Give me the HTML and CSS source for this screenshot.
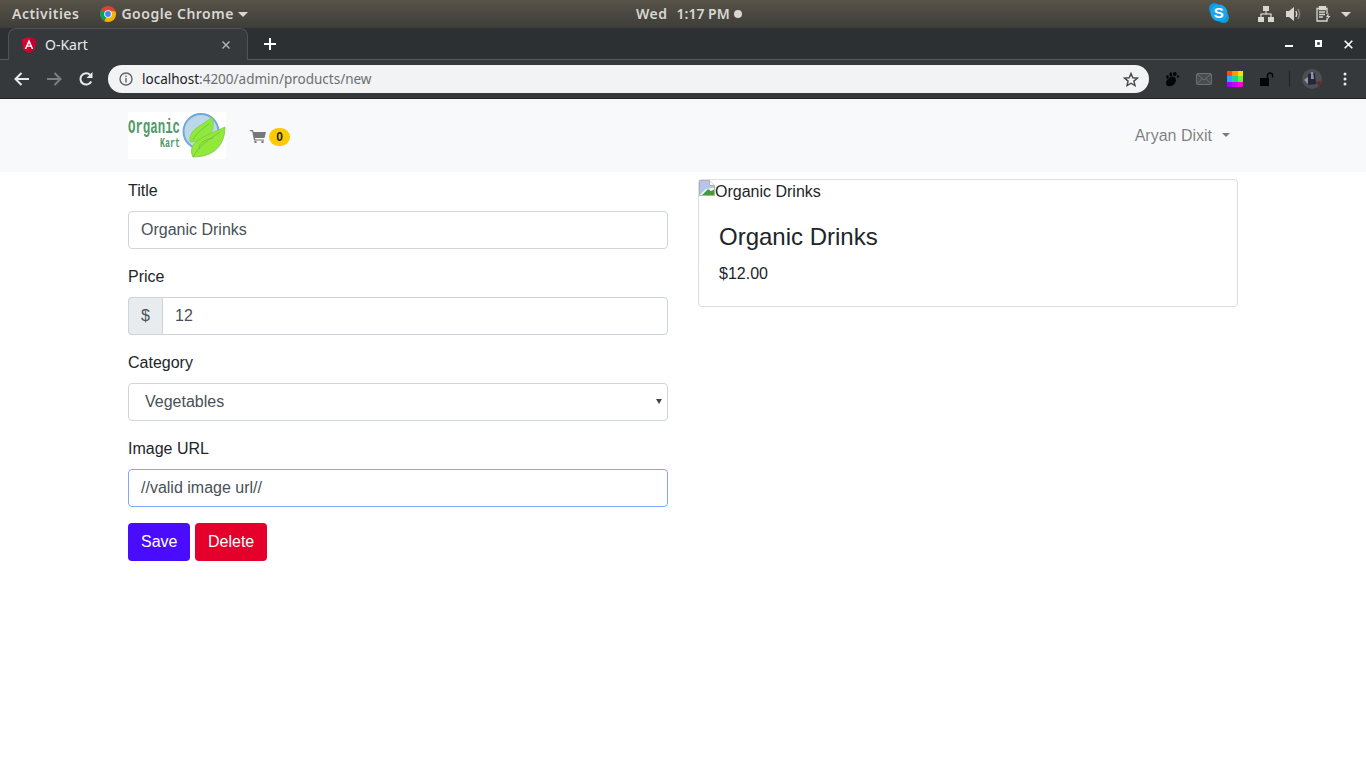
FILE: index.html
```html
<!DOCTYPE html>
<html lang="en">
<head>
  <meta charset="UTF-8">
  <title>O-Kart</title>
  <link rel="stylesheet" href="styles.css">
</head>
<body>

  <!-- Desktop top bar -->
  <div class="topbar">
    <div class="topbar-left">
      <span class="activities">Activities</span>
      <svg class="chrome-logo" width="16" height="16" viewBox="0 0 16 16">
        <circle cx="8" cy="8" r="8" fill="#db4437"/>
        <path d="M8 8 L1.07 4 A8 8 0 0 0 5 15.4 Z" fill="#0f9d58"/>
        <path d="M8 8 L4.4 15.1 A8 8 0 0 0 8 16 A8 8 0 0 0 15.6 5.5 L8 4.5 Z" fill="#f4b400"/>
        <circle cx="8" cy="8" r="3.8" fill="#fff"/>
        <circle cx="8" cy="8" r="2.9" fill="#4285f4"/>
      </svg>
      <span class="app-name">Google Chrome</span>
      <span class="caret-light app-caret"></span>
    </div>
    <div class="clock">
      <span class="clock-day">Wed</span>
      <span>1:17 PM</span>
      <span class="clock-dot"></span>
    </div>
    <div class="tray">
      <svg class="tray-skype" width="22" height="22" viewBox="0 0 22 22">
        <circle cx="6.5" cy="6.5" r="5.5" fill="#1296dc"/>
        <circle cx="15.5" cy="15.5" r="5.5" fill="#1296dc"/>
        <circle cx="11" cy="11" r="8.5" fill="#1ca6ea"/>
        <text x="11" y="16" text-anchor="middle" class="skype-s">S</text>
      </svg>
      <svg class="tray-net" width="16" height="16" viewBox="0 0 16 16" fill="#d8d6d0">
        <rect x="5" y="0" width="6" height="5"/>
        <rect x="7.4" y="5" width="1.2" height="3"/>
        <rect x="2.5" y="7.4" width="11" height="1.2"/>
        <rect x="2.4" y="8" width="1.2" height="3"/>
        <rect x="12.4" y="8" width="1.2" height="3"/>
        <rect x="0" y="11" width="6" height="5"/>
        <rect x="10" y="11" width="6" height="5"/>
      </svg>
      <svg class="tray-vol" width="16" height="16" viewBox="0 0 16 16">
        <path d="M0 5 H3 L8 1 V15 L3 11 H0 Z" fill="#d8d6d0"/>
        <path d="M10 5 Q11.5 8 10 11" stroke="#d8d6d0" stroke-width="1.5" fill="none"/>
        <path d="M12 3 Q15 8 12 13" stroke="#85837d" stroke-width="1.5" fill="none"/>
      </svg>
      <svg class="tray-clip" width="16" height="16" viewBox="0 0 16 16" fill="none" stroke="#d8d6d0" stroke-width="1.3">
        <path d="M3 2.5 H11 V8 M11 12 V15 H1 V2.5 H3" transform="translate(1 0)"/>
        <rect x="4.5" y="0.5" width="6" height="3" fill="#d8d6d0"/>
        <path d="M4 6 H10 M4 8.5 H10 M4 11 H8"/>
        <path d="M13.5 7 L11 11 H13 L11.5 14.5 L15.5 10 H13.5 Z" fill="#d8d6d0" stroke="none"/>
      </svg>
      <span class="caret-light"></span>
    </div>
  </div>

  <!-- Chrome tabs -->
  <div class="tabstrip">
    <div class="tab">
      <svg class="tab-icon" width="14" height="16" viewBox="0 0 14 16">
        <path d="M7 0 L14 2.5 L12.9 12.6 L7 16 L1.1 12.6 L0 2.5 Z" fill="#dd0031"/>
        <path d="M7 0 L14 2.5 L12.9 12.6 L7 16 Z" fill="#c3002f"/>
        <path d="M7 2.2 L2.7 12 H4.3 L5.2 9.8 H8.8 L9.7 12 H11.3 Z M6 8.5 L7 6 L8 8.5 Z" fill="#fff" fill-rule="evenodd"/>
      </svg>
      <span class="tab-title">O-Kart</span>
      <svg class="tab-close" width="10" height="10" viewBox="0 0 10 10">
        <path d="M1.5 1.5 L8.5 8.5 M8.5 1.5 L1.5 8.5" stroke="#b5b8ba" stroke-width="1.4"/>
      </svg>
    </div>
    <svg class="new-tab" width="12" height="12" viewBox="0 0 12 12">
      <path d="M6 0 V12 M0 6 H12" stroke="#fff" stroke-width="2"/>
    </svg>
    <div class="window-controls">
      <svg width="8" height="8" viewBox="0 0 8 8"><rect x="0" y="5" width="8" height="2" fill="#fff"/></svg>
      <svg width="7" height="8" viewBox="0 0 7 8"><path d="M0 0 H7 V7 H0 Z M2.2 2.2 V4.8 H4.8 V2.2 Z" fill="#fff" fill-rule="evenodd"/></svg>
      <svg width="9" height="9" viewBox="0 0 9 9"><path d="M0.7 0.7 L8.3 8.3 M8.3 0.7 L0.7 8.3" stroke="#fff" stroke-width="1.6"/></svg>
    </div>
  </div>

  <!-- Chrome toolbar -->
  <div class="toolbar">
    <svg class="nav-btn" width="16" height="14" viewBox="0 0 16 14" fill="none" stroke="#e8eaed" stroke-width="2">
      <path d="M15 7 H2 M7.5 1 L1.5 7 L7.5 13"/>
    </svg>
    <svg class="nav-btn" width="16" height="14" viewBox="0 0 16 14" fill="none" stroke="#7c7f82" stroke-width="2">
      <path d="M1 7 H14 M8.5 1 L14.5 7 L8.5 13"/>
    </svg>
    <svg class="nav-btn nav-reload" width="16" height="16" viewBox="0 0 16 16" fill="none" stroke="#e8eaed" stroke-width="2">
      <path d="M13.2 10.5 A5.7 5.7 0 1 1 12.2 3.9"/>
      <path d="M14.5 1 V7 H8.5 Z" fill="#e8eaed" stroke="none"/>
    </svg>
    <div class="omnibox">
      <svg class="info-icon" width="14" height="14" viewBox="0 0 14 14" fill="none" stroke="#5f6368" stroke-width="1.4">
        <circle cx="7" cy="7" r="6"/>
        <path d="M7 6 V10.5 M7 3.5 V5"/>
      </svg>
      <span class="url"><span class="url-host">localhost</span>:4200/admin/products/new</span>
      <svg class="star-icon" width="16" height="15" viewBox="0 0 16 15" fill="none" stroke="#45484b" stroke-width="1.4">
        <path d="M8 1.5 L9.8 5.8 L14.5 6.1 L10.9 9.1 L12 13.6 L8 11.2 L4 13.6 L5.1 9.1 L1.5 6.1 L6.2 5.8 Z"/>
      </svg>
    </div>
    <div class="extensions">
      <svg class="ext ext-foot" width="14" height="15" viewBox="0 0 14 15" fill="#050505">
        <path d="M5.5 5 C10 3 12 7 10.500 10 C9 14.500 3 15.500 1.500 13 C0.500 11 1 7.500 5.500 5 Z"/>
        <ellipse cx="2.500" cy="5" rx="1.200" ry="2"/>
        <ellipse cx="5.800" cy="2.500" rx="1.400" ry="2.200"/>
        <ellipse cx="9.800" cy="2" rx="1.900" ry="1.900"/>
        <ellipse cx="13" cy="4.500" rx="1" ry="1.500"/>
      </svg>
      <svg class="ext ext-mail" width="16" height="12" viewBox="0 0 16 12" fill="#494c4e" stroke="#6f7273" stroke-width="1">
        <rect x="0.5" y="0.5" width="15" height="11" rx="1"/>
        <path d="M1 1 L8 7 L15 1 M1 11 L6 5.500 M15 11 L10 5.500" fill="none"/>
      </svg>
      <div class="ext palette">
        <i style="background:#ff4a0a"></i><i style="background:#ff9800"></i><i style="background:#ffe000"></i>
        <i style="background:#2aa8ff"></i><i style="background:#18d890"></i><i style="background:#70f030"></i>
        <i style="background:#a000ff"></i><i style="background:#d000f0"></i><i style="background:#ff00d0"></i>
      </div>
      <svg class="ext ext-lock" width="15" height="14" viewBox="0 0 15 14">
        <rect x="0" y="6" width="9" height="8" fill="#050505"/>
        <path d="M7.500 6 V3.500 A2.500 2.500 0 0 1 12.500 3.500 V5.500" fill="none" stroke="#050505" stroke-width="1.500"/>
      </svg>
      <span class="ext-divider"></span>
      <svg class="ext ext-avatar" width="20" height="20" viewBox="0 0 20 20">
        <circle cx="10" cy="10" r="10" fill="#4d4f52"/>
        <path d="M6 5 L13 4 L14 15 L6 16 Z" fill="#24263a"/>
        <path d="M9 3 L11 3 L12 10 L9 10 Z" fill="#8d93a4"/>
        <path d="M14 13 L19 12 L17 17 Z" fill="#7c1e22"/>
        <path d="M2 11 L6 8 L6 15 Z" fill="#93979b"/>
      </svg>
      <svg class="ext" width="4" height="14" viewBox="0 0 4 14" fill="#e8eaed">
        <circle cx="2" cy="2" r="1.500"/><circle cx="2" cy="7" r="1.500"/><circle cx="2" cy="12" r="1.500"/>
      </svg>
    </div>
  </div>

  <!-- Site navbar -->
  <nav class="navbar">
    <div class="container navbar-inner">
      <svg class="brand" width="98" height="47" viewBox="0 0 98 47">
        <rect width="98" height="47" fill="#fff"/>
        <circle cx="73" cy="19.500" r="17.500" fill="#bcd8e8" stroke="#6fa8dc" stroke-width="2"/>
        <text x="0" y="21" class="brand-name" textLength="52" lengthAdjust="spacingAndGlyphs">Organic</text>
        <text x="32" y="35" class="brand-sub" textLength="20" lengthAdjust="spacingAndGlyphs">Kart</text>
        <path d="M62 30 C60 17 74 14 84 5 C88 18 83 29 62 30 Z" fill="#8fe83c" stroke="#7ac943" stroke-width="0.600"/>
        <path d="M65 45 C58 30 76 25 97 15 C97 32 87 45 65 45 Z" fill="#93e93a" stroke="#7ac943" stroke-width="0.800"/>
        <path d="M65 45 C71 34 80 28 92 20 M71 37 C71 31 76 28 85 26 M65 28 C69 20 74 17 81 12" fill="none" stroke="#6fb54c" stroke-width="0.700"/>
      </svg>
      <div class="cart">
        <svg width="16" height="13" viewBox="0 0 16 13" fill="#777">
          <path d="M0 0 H3 L3.500 2 H16 L14.500 8 H5 L5.300 9.500 H14 V10.500 H4 L2.200 1.200 H0 Z"/>
          <circle cx="5.500" cy="12" r="1.200"/><circle cx="12.500" cy="12" r="1.200"/>
        </svg>
        <span class="badge">0</span>
      </div>
      <div class="user-menu">Aryan Dixit<span class="caret"></span></div>
    </div>
  </nav>

  <!-- Product form and preview -->
  <div class="container content">
    <form class="product-form">
      <div class="form-group">
        <label for="title">Title</label>
        <input class="form-control" id="title" type="text" value="Organic Drinks">
      </div>
      <div class="form-group">
        <label for="price">Price</label>
        <div class="input-group">
          <span class="input-prefix">$</span>
          <input class="form-control" id="price" type="text" value="12">
        </div>
      </div>
      <div class="form-group">
        <label for="category">Category</label>
        <div class="select-wrap">
          <select class="form-control" id="category">
            <option>Vegetables</option>
          </select>
        </div>
      </div>
      <div class="form-group">
        <label for="image-url">Image URL</label>
        <input class="form-control focused" id="image-url" type="text" value="//valid image url//">
      </div>
      <div class="form-buttons">
        <button class="btn btn-save" type="button">Save</button>
        <button class="btn btn-delete" type="button">Delete</button>
      </div>
    </form>

    <div class="preview">
      <div class="card">
        <div class="card-img">
          <svg class="broken-img" width="16" height="16" viewBox="0 0 16 16">
            <path d="M0.500 0.500 H10.500 L15.500 5.500 V15.500 H0.500 Z" fill="#fff" stroke="#b0b0b0"/>
            <path d="M1 1 H10 V6 H15 V8 L7 9 L1 15 Z" fill="#b4c6ee"/>
            <path d="M3 15 L9 9 L12 11 L15 9.500 V15 Z" fill="#3f9e3a"/>
            <path d="M10.500 0.500 V5.500 H15.500" fill="#fff" stroke="#b0b0b0"/>
          </svg>
          <span>Organic Drinks</span>
        </div>
        <div class="card-body">
          <h4 class="card-title">Organic Drinks</h4>
          <p class="card-text">$12.00</p>
        </div>
      </div>
    </div>
  </div>

</body>
</html>
```

FILE: styles.css
```css
/* General */
* {
  box-sizing: border-box;
}

body {
  margin: 0;
  background-color: #fff;
  font-family: "Liberation Sans", Arial, sans-serif;
  font-size: 16px;
  line-height: 24px;
  color: #212529;
  overflow: hidden;
}

/* Desktop top bar */
.topbar {
  display: grid;
  grid-template-columns: 636px auto 1fr;
  align-items: center;
  height: 28px;
  background: linear-gradient(#575349, #3e3d39);
  color: #d9d7d2;
  font-family: "Noto Sans", sans-serif;
  font-size: 14px;
  font-weight: 600;
  letter-spacing: 0.5px;
}

.topbar-left {
  display: flex;
  align-items: center;
  padding-left: 12px;
}

.chrome-logo {
  margin-left: 21px;
}

.app-name {
  margin-left: 5px;
}

.caret-light {
  width: 0;
  height: 0;
  margin-left: 6px;
  border-left: 5px solid transparent;
  border-right: 5px solid transparent;
  border-top: 5px solid #d9d7d2;
}

.app-caret {
  margin-left: 4px;
}

.clock {
  display: flex;
  align-items: center;
  letter-spacing: 0;
}

.clock-day {
  margin-right: 9px;
  letter-spacing: 0.5px;
}

.clock-dot {
  width: 8px;
  height: 8px;
  margin-left: 4px;
  border-radius: 50%;
  background-color: #d9d7d2;
}

.tray {
  display: flex;
  align-items: center;
  justify-content: flex-end;
  padding-right: 15px;
}

.tray-skype {
  margin-right: 28px;
  margin-bottom: 2px;
}

.tray-net {
  margin-right: 12px;
}

.tray-vol {
  margin-right: 13px;
}

.tray-clip {
  margin-right: 4px;
}

.skype-s {
  fill: #fff;
  font-family: "Liberation Sans", sans-serif;
  font-size: 15px;
  font-weight: 700;
}

/* Chrome tabs */
.tabstrip {
  display: flex;
  align-items: flex-end;
  height: 32px;
  background-color: #2d3033;
  box-shadow: inset 0 -1px #56595c;
}

.tab {
  display: flex;
  align-items: center;
  width: 240px;
  height: 32px;
  margin-left: 8px;
  padding: 0 16px 0 13px;
  background-color: #35393c;
  border: 1px solid #4f5356;
  border-bottom: none;
  border-radius: 8px 8px 0 0;
  color: #e8eaed;
  font-family: "Noto Sans", sans-serif;
  font-size: 14px;
}

.tab-title {
  flex: 1;
  margin-left: 9px;
}

.new-tab {
  align-self: center;
  margin-left: 16px;
}

.window-controls {
  display: flex;
  align-items: center;
  gap: 22px;
  align-self: center;
  margin-left: auto;
  padding-right: 13px;
}

/* Chrome toolbar */
.toolbar {
  display: flex;
  align-items: center;
  height: 39px;
  padding-left: 14px;
  background-color: #35393c;
  border-bottom: 1px solid #1f2123;
}

.nav-btn {
  margin-right: 16px;
}

.nav-reload {
  margin-right: 14px;
}

.omnibox {
  display: flex;
  align-items: center;
  width: 1041px;
  height: 28px;
  padding: 0 10px 0 11px;
  background-color: #f1f3f4;
  border-radius: 14px;
  color: #6b6f73;
  font-family: "Noto Sans", sans-serif;
  font-size: 13.5px;
}

.url {
  flex: 1;
  margin-left: 9px;
}

.url-host {
  color: #202124;
}

.extensions {
  display: flex;
  align-items: center;
  padding-left: 16px;
}

.ext {
  flex: none;
  margin-right: 17px;
}

.ext-mail {
  margin-right: 15px;
}

.ext-lock {
  margin-right: 14px;
}

.ext-avatar {
  margin-right: 21px;
}

.palette {
  display: grid;
  grid-template-columns: repeat(3, 1fr);
  width: 16px;
  height: 16px;
}

.ext-divider {
  width: 1px;
  height: 16px;
  margin-right: 12px;
  background-color: #1f2123;
}

/* Site navbar */
.container {
  width: 1110px;
  margin: 0 auto;
}

.navbar {
  height: 73px;
  background-color: #f8f9fa;
}

.navbar-inner {
  display: flex;
  align-items: center;
  height: 100%;
}

.brand {
  flex: none;
}

.brand-name {
  fill: #4f9a68;
  font-family: "Liberation Mono", monospace;
  font-size: 20px;
  font-weight: 700;
}

.brand-sub {
  fill: #4f9a68;
  font-family: "Liberation Mono", monospace;
  font-size: 12px;
  font-weight: 700;
}

.cart {
  display: flex;
  align-items: center;
  margin-left: 24px;
  margin-top: 2px;
}

.badge {
  width: 21px;
  height: 18px;
  margin-left: 3px;
  border-radius: 9px;
  background-color: #ffcb00;
  color: #212529;
  font-size: 12px;
  font-weight: 700;
  line-height: 18px;
  text-align: center;
}

.user-menu {
  margin-left: auto;
  padding-right: 8px;
  color: rgba(0, 0, 0, 0.5);
}

.caret {
  display: inline-block;
  margin-left: 10px;
  vertical-align: 4px;
  border-top: 4.8px solid;
  border-left: 4.8px solid transparent;
  border-right: 4.8px solid transparent;
}

/* Product form */
.content {
  display: grid;
  grid-template-columns: 540px 540px;
  column-gap: 30px;
  padding-top: 7px;
}

.form-group {
  margin-bottom: 16px;
}

label {
  display: block;
  margin-bottom: 8px;
}

.form-control {
  display: block;
  width: 100%;
  height: 38px;
  padding: 6px 12px;
  background-color: #fff;
  border: 1px solid #ced4da;
  border-radius: 4px;
  color: #495057;
  font-family: inherit;
  font-size: 16px;
  line-height: 24px;
}

.form-control.focused {
  border-color: #80a6ff;
  outline: none;
}

.select-wrap {
  position: relative;
}

.select-wrap select {
  padding: 5px 16px;
  appearance: none;
}

/* little native arrow of the select */
.select-wrap::after {
  content: "";
  position: absolute;
  top: 16px;
  right: 6px;
  border-top: 5px solid #444;
  border-left: 3px solid transparent;
  border-right: 3px solid transparent;
}

.input-group {
  display: flex;
}

.input-group .form-control {
  border-radius: 0 4px 4px 0;
}

.input-prefix {
  flex: none;
  width: 34px;
  height: 38px;
  padding: 6px 12px;
  background-color: #e9ecef;
  border: 1px solid #ced4da;
  border-right: none;
  border-radius: 4px 0 0 4px;
  color: #495057;
}

.form-buttons {
  display: flex;
  gap: 5px;
}

.btn {
  height: 38px;
  padding: 6px 12.5px;
  border: none;
  border-radius: 4px;
  color: #fff;
  font-family: inherit;
  font-size: 16px;
  line-height: 24px;
}

.btn-save {
  padding: 6px 13px;
  background-color: #4a0cff;
}

.btn-delete {
  background-color: #e4002b;
}

/* Product preview */
.card {
  height: 128px;
  border: 1px solid #dfdfdf;
  border-radius: 4px;
}

.card-img {
  display: flex;
  align-items: flex-start;
  height: 22px;
}

.broken-img {
  flex: none;
}

.card-body {
  padding: 20px;
}

.card-title {
  margin: 0 0 11px;
  font-size: 24px;
  font-weight: 500;
  line-height: 29px;
}

.card-text {
  margin: 0;
}
```
